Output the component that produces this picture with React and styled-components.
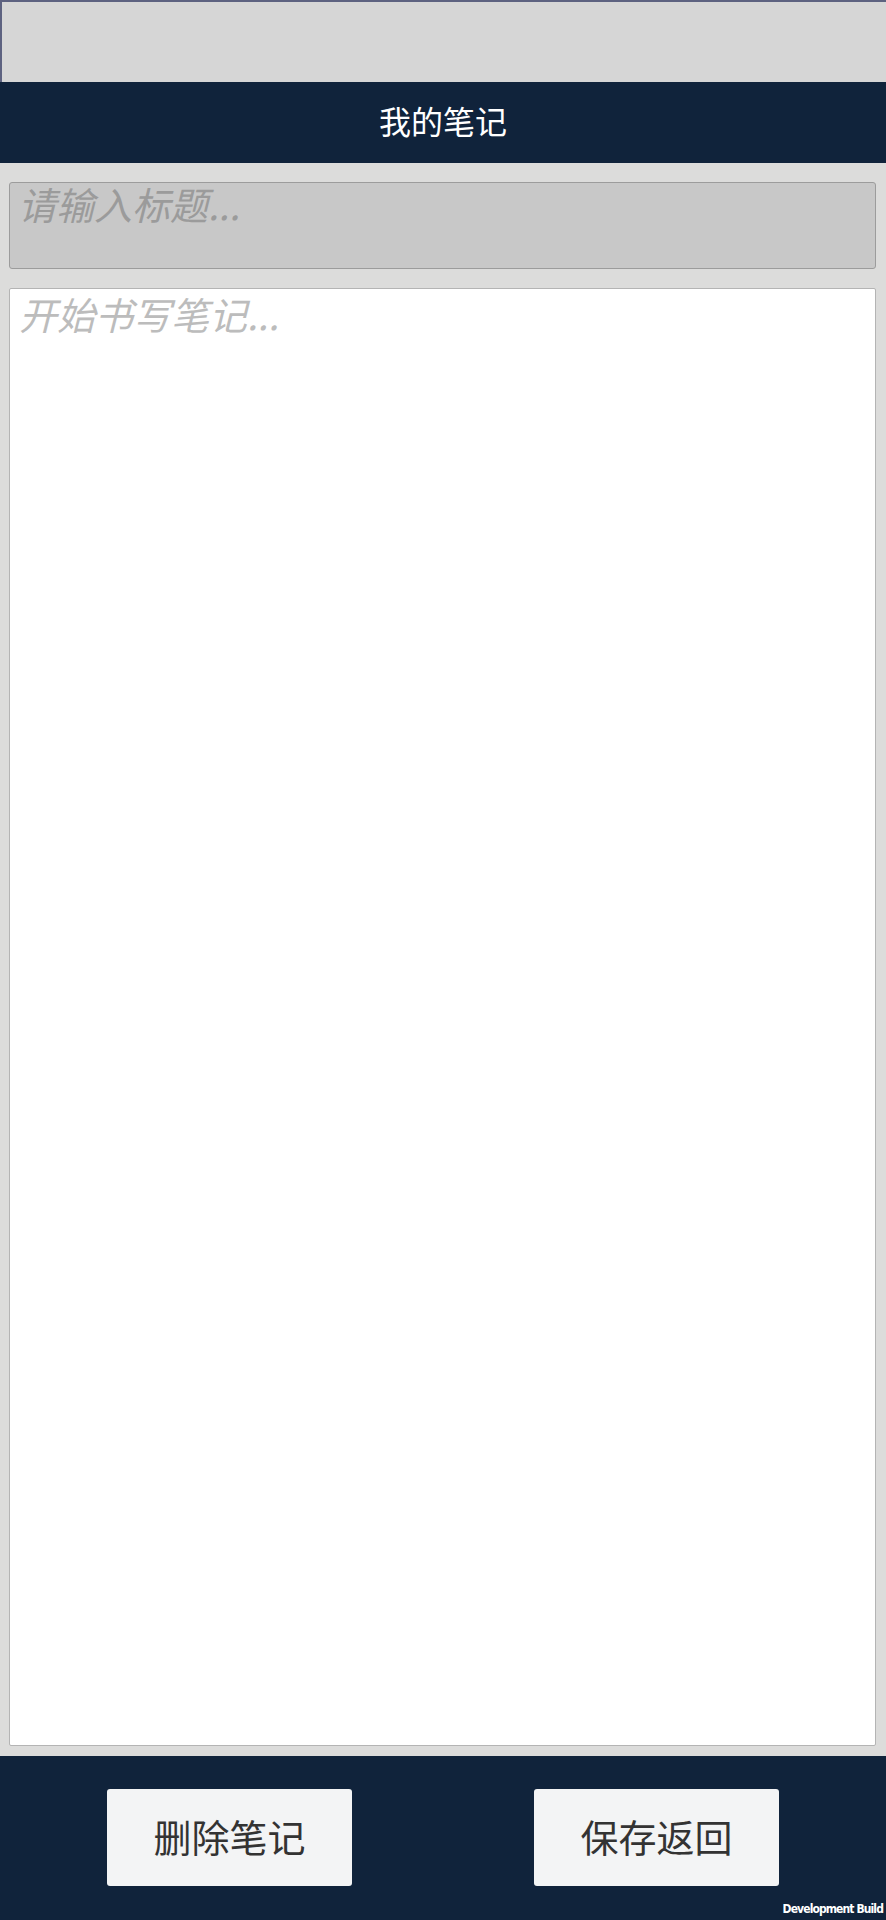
import styled, { createGlobalStyle } from "styled-components";

const GlobalStyle = createGlobalStyle`
    html, body {
        margin: 0;
        padding: 0;
        background: #dcdcdb;
    }

    body {
        font-family: "Noto Sans", "Noto Sans CJK SC", sans-serif;
    }

    * {
        box-sizing: border-box;
    }
`

const Screen = styled.div`
    display: flex;
    flex-direction: column;
    width: 886px;
    height: 1920px;
    position: relative;
    overflow: hidden;
`

const StatusArea = styled.div`
    height: 82px;
    flex-shrink: 0;
    background: #d6d6d6;
    border-top: 2px solid #5d6280;
    border-left: 2px solid #5d6280;
`

const NavBar = styled.header`
    height: 81px;
    flex-shrink: 0;
    display: flex;
    align-items: center;
    justify-content: center;
    background: #10233b;
    color: #ffffff;
    font-family: "Noto Sans CJK SC", sans-serif;
    font-size: 32px;
    padding-bottom: 6px;
`

const Editor = styled.main`
    flex: 1;
    display: flex;
    flex-direction: column;
    gap: 19px;
    padding: 19px 10px 10px 9px;
    background: #dcdcdb;
`

const TitleInput = styled.input`
    height: 87px;
    flex-shrink: 0;
    width: 100%;
    padding: 0 8px 45px;
    background: #c8c8c8;
    border: 1px solid #9c9c9c;
    border-radius: 3px;
    font-family: "Noto Sans CJK SC", sans-serif;
    font-size: 38px;
    line-height: 40px;
    font-style: italic;
    color: #333;
    outline: none;

    &::placeholder {
        color: #9b9b9b;
    }
`

const BodyInput = styled.textarea`
    flex: 1;
    width: 100%;
    resize: none;
    padding: 0 9px;
    background: #ffffff;
    border: 1px solid #b4b4b4;
    border-radius: 2px;
    font-family: "Noto Sans CJK SC", sans-serif;
    font-size: 38px;
    line-height: 1.3;
    font-style: italic;
    color: #333;
    outline: none;

    &::placeholder {
        color: #bcbcbc;
    }
`

const Footer = styled.footer`
    height: 164px;
    flex-shrink: 0;
    display: flex;
    align-items: flex-start;
    gap: 182px;
    padding: 33px 0 0 107px;
    background: #10233b;
`

const ActionButton = styled.button`
    width: 245px;
    height: 97px;
    display: flex;
    align-items: center;
    justify-content: center;
    background: #f3f4f5;
    border: none;
    border-radius: 3px;
    color: #333333;
    font-family: "Noto Sans CJK SC", sans-serif;
    font-size: 38px;
    padding: 0 0 4px;
    cursor: pointer;
`

const BuildTag = styled.span`
    position: absolute;
    right: 3px;
    bottom: 4px;
    color: #ffffff;
    font-family: "DejaVu Sans Condensed", "DejaVu Sans", sans-serif;
    font-weight: bold;
    font-size: 12px;
    letter-spacing: -0.9px;
`

const App = () => {
    return (
        <>
            <GlobalStyle />
            <Screen>
                <StatusArea />
                <NavBar>我的笔记</NavBar>
                <Editor>
                    <TitleInput placeholder="请输入标题..." />
                    <BodyInput placeholder="开始书写笔记..." />
                </Editor>
                <Footer>
                    <ActionButton>删除笔记</ActionButton>
                    <ActionButton>保存返回</ActionButton>
                </Footer>
                <BuildTag>Development Build</BuildTag>
            </Screen>
        </>
    )
}

export default App;
